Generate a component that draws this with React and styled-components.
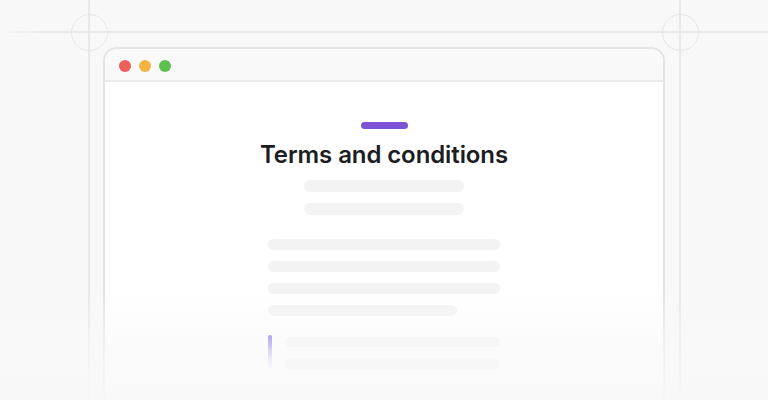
import styled, { createGlobalStyle } from "styled-components"

const GlobalStyles = createGlobalStyle`
  html, body {
    margin: 0;
    padding: 0;
    background: #f8f8f8;
  }
  body {
    font-family: Inter, "Liberation Sans", sans-serif;
    overflow: hidden;
  }
`

const Escena = styled.div`
  position: relative;
  width: 768px;
  height: 400px;
  overflow: hidden;
  background: #f8f8f8;
  display: flex;
  justify-content: center;
  padding-top: 47px;
  box-sizing: border-box;
`

const GuiaH = styled.div`
  position: absolute;
  left: 0;
  right: 0;
  top: 31px;
  height: 2px;
  background: linear-gradient(90deg, rgba(232,232,232,0) 0%, #e9e9e9 6%, #e9e9e9 100%);
`

const GuiaV = styled.div`
  position: absolute;
  top: 0;
  bottom: 0;
  left: ${p => p.$x}px;
  width: 2px;
  background: #e8e8e8;
`

const Circulo = styled.div`
  position: absolute;
  left: ${p => p.$x - 18}px;
  top: 14px;
  width: 37px;
  height: 37px;
  border-radius: 50%;
  border: 1px solid #e6e6e6;
  box-sizing: border-box;
`

const Ventana = styled.div`
  position: relative;
  z-index: 1;
  width: 562px;
  height: 370px;
  box-sizing: border-box;
  border: 2px solid #e4e4e4;
  border-bottom: none;
  border-radius: 14px 14px 0 0;
  background: #fff;
  overflow: hidden;
  display: flex;
  flex-direction: column;
`

const BarraTitulo = styled.div`
  height: 33px;
  box-sizing: border-box;
  flex-shrink: 0;
  background: #f9f9f9;
  border-bottom: 2px solid #ebebeb;
  display: flex;
  align-items: flex-start;
  gap: 8px;
  padding: 11px 0 0 14px;
`

const Punto = styled.span`
  width: 12px;
  height: 12px;
  border-radius: 50%;
  background: ${p => p.$color};
`

const Contenido = styled.div`
  display: flex;
  flex-direction: column;
  align-items: center;
  padding-top: 40px;
`

const Acento = styled.div`
  width: 47px;
  height: 7px;
  border-radius: 4px;
  background: #7b53d5;
`

const Titulo = styled.h1`
  margin: 11px 0 0;
  font-size: 24px;
  line-height: 29px;
  font-weight: 600;
  color: #1c1d23;
  letter-spacing: -0.1px;
`

const Grupo = styled.div`
  display: flex;
  flex-direction: column;
  align-items: flex-start;
  gap: ${p => p.$gap}px;
  margin-top: ${p => p.$top}px;
`

const Linea = styled.div`
  width: ${p => p.$w}px;
  height: ${p => p.$h || 11}px;
  border-radius: 6px;
  background: #f3f3f3;
`

const Item = styled.div`
  display: flex;
  gap: 13px;
  margin-top: 10px;
`

const Marcador = styled.div`
  width: 4px;
  height: 36px;
  margin-top: -2px;
  border-radius: 2px;
  background: linear-gradient(180deg, #6f52dc 0%, #8a74e6 30%, rgba(170,155,240,0.55) 65%, rgba(200,190,245,0) 100%);
`

const Desvanecido = styled.div`
  position: absolute;
  z-index: 2;
  left: 0;
  right: 0;
  bottom: 0;
  height: 110px;
  background: linear-gradient(180deg, rgba(248,248,248,0) 0%, rgba(249,249,249,0.65) 55%, rgba(248,248,248,0.95) 100%);
`

const App = () => {
  return (
    <>
      <GlobalStyles />
      <Escena>
        <GuiaH />
        <GuiaV $x={88} />
        <GuiaV $x={679} />
        <Circulo $x={89} />
        <Circulo $x={680} />
        <Ventana>
          <BarraTitulo>
            <Punto $color="#ec5f5a" />
            <Punto $color="#f4b443" />
            <Punto $color="#5ec04f" />
          </BarraTitulo>
          <Contenido>
            <Acento />
            <Titulo>Terms and conditions</Titulo>
            <Grupo $gap={11} $top={11}>
              <Linea $w={160} $h={12} />
              <Linea $w={160} $h={12} />
            </Grupo>
            <Grupo $gap={11} $top={24}>
              <Linea $w={232} />
              <Linea $w={232} />
              <Linea $w={232} />
              <Linea $w={189} />
              <Item>
                <Marcador />
                <Grupo $gap={12} $top={0}>
                  <Linea $w={215} $h={10} />
                  <Linea $w={215} $h={10} />
                </Grupo>
              </Item>
            </Grupo>
          </Contenido>
        </Ventana>
        <Desvanecido />
      </Escena>
    </>
  )
}

export default App
